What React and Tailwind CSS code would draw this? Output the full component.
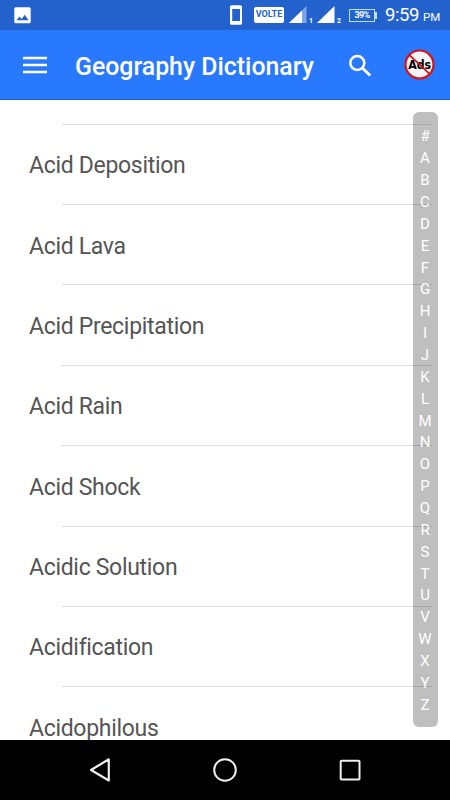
import React from "react";

const terms = [
  "Acid Deposition",
  "Acid Lava",
  "Acid Precipitation",
  "Acid Rain",
  "Acid Shock",
  "Acidic Solution",
  "Acidification",
  "Acidophilous",
];

const letters = "#ABCDEFGHIJKLMNOPQRSTUVWXYZ".split("");

function StatusBar() {
  return (
    <div className="flex h-[30px] shrink-0 items-center bg-[#2362cc] pl-[14px] pr-[10px] text-white">
      <svg className="h-[17px] w-[17px]" viewBox="0 0 17 17">
        <rect x="0.3" y="0.3" width="16.4" height="16" rx="1.5" fill="#fff" />
        <path d="M2.5 13.3L5.5 9.5L7.7 11.9L10.8 7.8L14.5 13.3Z" fill="#2362cc" />
      </svg>
      <div className="ml-auto flex h-full items-center">
        <svg className="h-5 w-3" viewBox="0 0 12 20">
          <path
            d="M1.5 0.3H10.5Q12 0.3 12 1.8V18.2Q12 19.7 10.5 19.7H1.5Q0 19.7 0 18.2V1.8Q0 0.3 1.5 0.3ZM2.2 4V16H10V4Z"
            fill="#fff"
            fillRule="evenodd"
          />
        </svg>
        <div className="ml-[12px] flex h-[16px] w-[30px] items-center justify-center rounded-[2px] bg-white text-[9px] font-bold text-[#2362cc]">
          VOLTE
        </div>
        <svg className="ml-[5px] h-[18px] w-[23px]" viewBox="0 0 23 18">
          <path d="M0 17L17.5 0V17Z" fill="#7da4e4" />
          <path d="M0 17L13 4.4V17Z" fill="#fff" />
        </svg>
        <span className="-ml-[3px] mt-[12px] w-[5px] text-[7px] font-bold leading-none">1</span>
        <svg className="ml-[3px] h-[18px] w-[18px]" viewBox="0 0 18 18">
          <path d="M0 17L17.5 0V17Z" fill="#fff" />
        </svg>
        <span className="ml-[2px] mt-[12px] w-[5px] text-[7px] font-bold leading-none">2</span>
        <div className="ml-[7px] flex h-[13px] w-[26px] items-center justify-center border border-[#b9e2ff] text-[9px] font-bold leading-none tracking-[-0.6px]">
          39%
        </div>
        <div className="h-[7px] w-[2px] bg-[#b9e2ff]" />
        <div className="ml-[8px] flex w-[55px] items-baseline whitespace-nowrap">
          <span className="text-[18.5px] leading-[30px] tracking-[-0.4px]">9:59</span>
          <span className="ml-[4px] text-[11.5px]">PM</span>
        </div>
      </div>
    </div>
  );
}

function AppBar() {
  return (
    <header className="flex h-[70px] shrink-0 items-center border-b border-[#1c61cc] bg-[#2979ff] pl-[23px] pr-[15px] text-white">
      <svg className="h-[18px] w-6" viewBox="0 0 24 18">
        <path d="M0 2H24M0 9H24M0 16H24" stroke="#fff" strokeWidth="2.5" />
      </svg>
      <h1 className="ml-[28px] mt-[5px] whitespace-nowrap text-[24.85px] font-medium leading-8">
        Geography Dictionary
      </h1>
      <svg className="ml-auto mt-[2px] h-6 w-6" viewBox="0 0 24 24" fill="none" stroke="#fff">
        <circle cx="9.3" cy="9" r="7" strokeWidth="2.5" />
        <path d="M14.3 14L22.2 21.5" strokeWidth="3" />
      </svg>
      <svg className="ml-[32px] h-[31px] w-[31px]" viewBox="0 0 31 31">
        <circle cx="15.5" cy="15.5" r="14" fill="#f7f5f5" stroke="#d2151d" strokeWidth="2.2" />
        <text
          x="15.7"
          y="20"
          textAnchor="middle"
          fontFamily="DejaVu Sans"
          fontWeight="bold"
          fontSize="12"
          textLength="23"
          lengthAdjust="spacingAndGlyphs"
          fill="#000"
        >
          Ads
        </text>
        <path d="M5.2 5.8L25.8 25.2" stroke="#c8141c" strokeWidth="1.8" />
      </svg>
    </header>
  );
}

function NavigationBar() {
  return (
    <nav className="flex h-[60px] shrink-0 items-center justify-between bg-black px-[88px]">
      <svg className="h-6 w-6" viewBox="0 0 24 24" fill="none" stroke="#eee" strokeWidth="2.2" strokeLinejoin="round">
        <path d="M20.8 1.3V22.5L3 12Z" />
      </svg>
      <svg className="h-6 w-6" viewBox="0 0 24 24" fill="none" stroke="#eee" strokeWidth="2">
        <circle cx="12" cy="12" r="10.8" />
      </svg>
      <svg className="h-6 w-6" viewBox="0 0 24 24" fill="none" stroke="#eee" strokeWidth="2">
        <rect x="2.7" y="2.7" width="18.8" height="18.8" rx="0.8" />
      </svg>
    </nav>
  );
}

export default function App() {
  return (
    <div className="flex h-[800px] w-[450px] flex-col overflow-hidden bg-white font-['Roboto',sans-serif]">
      <StatusBar />
      <AppBar />
      <main className="relative min-h-0 flex-1 overflow-hidden pt-[23.8px]">
        <ul>
          {terms.map((term) => (
            <li key={term} className="h-[80.35px]">
              <div className="ml-[62px] mr-[18px] h-px bg-[#dedede]" />
              <div className="flex h-[79.35px] items-center pl-[29px] pt-[4px] text-[23px] tracking-[-0.31px] text-[#555]">
                {term}
              </div>
            </li>
          ))}
        </ul>
        <div className="absolute right-[12.5px] top-[12px] flex h-[615px] w-[25px] flex-col items-center rounded-[6px] bg-black/25 pt-[14px] text-[15px] text-white">
          {letters.map((letter) => (
            <span key={letter} className="flex h-[21.86px] shrink-0 items-center leading-none">
              {letter}
            </span>
          ))}
        </div>
      </main>
      <NavigationBar />
    </div>
  );
}
